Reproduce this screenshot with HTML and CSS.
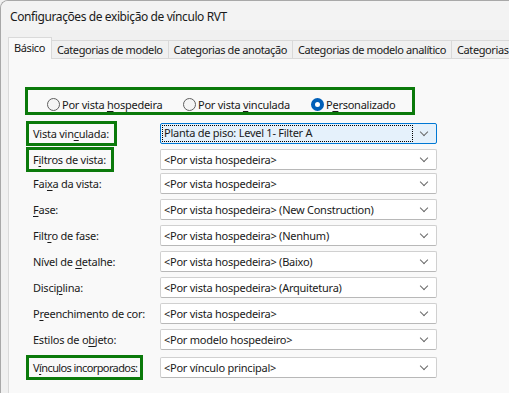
FILE: index.html
```html
<!DOCTYPE html>
<html lang="pt">
<head>
    <meta charset="UTF-8">
    <title>Configurações de exibição de vínculo RVT</title>
    <link rel="stylesheet" href="styles.css">
</head>
<body>
    <div class="window">
        <div class="titlebar">Configurações de exibição de vínculo RVT</div>

        <div class="tabs">
            <div class="tab active">Básico</div>
            <div class="tab">Categorias de modelo</div>
            <div class="tab">Categorias de anotação</div>
            <div class="tab">Categorias de modelo analítico</div>
            <div class="tab">Categorias</div>
        </div>

        <div class="panel">
            <div class="radio-group">
                <label class="radio r1"><span class="dot"></span><span>Por vista <u>h</u>ospedeira</span></label>
                <label class="radio r2"><span class="dot"></span><span>Por vista <u>v</u>inculada</span></label>
                <label class="radio"><span class="dot checked"></span><span>P<u>e</u>rsonalizado</span></label>
            </div>

            <div class="rows">
                <div class="row">
                    <span class="label hl">Vista vin<u>c</u>ulada:</span>
                    <div class="combo focus"><span class="value">Planta de piso: Level 1- Filter A</span><span class="chev"></span></div>
                </div>
                <div class="row">
                    <span class="label hl">F<u>i</u>ltros de vista:</span>
                    <div class="combo"><span class="value">&lt;Por vista hospedeira&gt;</span><span class="chev"></span></div>
                </div>
                <div class="row">
                    <span class="label">Fai<u>x</u>a da vista:</span>
                    <div class="combo"><span class="value">&lt;Por vista hospedeira&gt;</span><span class="chev"></span></div>
                </div>
                <div class="row">
                    <span class="label"><u>F</u>ase:</span>
                    <div class="combo"><span class="value">&lt;Por vista hospedeira&gt; (New Construction)</span><span class="chev"></span></div>
                </div>
                <div class="row">
                    <span class="label">Filt<u>r</u>o de fase:</span>
                    <div class="combo"><span class="value">&lt;Por vista hospedeira&gt; (Nenhum)</span><span class="chev"></span></div>
                </div>
                <div class="row">
                    <span class="label">Nível de <u>d</u>etalhe:</span>
                    <div class="combo"><span class="value">&lt;Por vista hospedeira&gt; (Baixo)</span><span class="chev"></span></div>
                </div>
                <div class="row">
                    <span class="label">Disci<u>p</u>lina:</span>
                    <div class="combo"><span class="value">&lt;Por vista hospedeira&gt; (Arquitetura)</span><span class="chev"></span></div>
                </div>
                <div class="row">
                    <span class="label">P<u>r</u>eenchimento de cor:</span>
                    <div class="combo"><span class="value">&lt;Por vista hospedeira&gt;</span><span class="chev"></span></div>
                </div>
                <div class="row">
                    <span class="label">Estilos de o<u>b</u>jeto:</span>
                    <div class="combo"><span class="value">&lt;Por modelo hospedeiro&gt;</span><span class="chev"></span></div>
                </div>
                <div class="row">
                    <span class="label hl tight">V<u>í</u>nculos incorporados:</span>
                    <div class="combo"><span class="value">&lt;Por vínculo principal&gt;</span><span class="chev"></span></div>
                </div>
            </div>
        </div>
    </div>
</body>
</html>
```

FILE: styles.css
```css
/* Dialog window */
body {
    margin: 0;
    font-family: "Noto Sans", "Open Sans", sans-serif;
    font-size: 11px;
    letter-spacing: -0.25px;
    color: #1a1a1a;
    background-color: #f0f0f0;
    overflow: hidden;
}
.window {
    width: 509px;
    height: 393px;
    background-color: #f0f0f0;
    border-top: 1px solid #a8a8a8;
    border-left: 1px solid #a8a8a8;
    border-top-left-radius: 8px;
    box-sizing: border-box;
    overflow: hidden;
}
.titlebar {
    height: 29px;
    line-height: 31px;
    padding-left: 9px;
    font-size: 12px;
    letter-spacing: -0.4px;
    background-color: #f3f3f3;
}
/* Tab strip */
.tabs {
    display: flex;
    align-items: flex-end;
    height: 28px;
    padding-left: 7px;
    white-space: nowrap;
    letter-spacing: -0.4px;
}
.tab {
    height: 17px;
    line-height: 17px;
    padding: 0 5px;
    border: 1px solid #d9d9d9;
    border-bottom: none;
    border-left: none;
    background-color: #f0f0f0;
}
.tab.active {
    height: 21px;
    line-height: 19px;
    padding: 0 6px 0 5px;
    border-left: 1px solid #d9d9d9;
    background-color: #f9f9f9;
    margin-bottom: -1px;
    position: relative;
}
.panel {
    margin-left: 7px;
    width: 560px;
    height: 340px;
    border: 1px solid #d9d9d9;
    background-color: #f9f9f9;
    padding: 28px 0 0 16px;
}
/* Radio buttons */
.radio-group {
    display: flex;
    width: 365px;
    height: 15px;
    padding: 7px 0 0 19px;
    border: 3px solid #0b7a0b;
}
.radio {
    display: flex;
    align-items: center;
    gap: 2px;
    height: 15px;
}
.r1 { width: 136px; }
.r2 { width: 128px; }
.dot {
    width: 11px;
    height: 11px;
    border: 1px solid #5f5f5f;
    border-radius: 50%;
    background-color: #f5f5f5;
}
.dot.checked {
    width: 5px;
    height: 5px;
    border: 4px solid #005fb8;
    background-color: #fff;
}
/* Rows of labels and combo boxes */
.rows {
    margin-top: 6px;
    padding-left: 1px;
}
.row {
    display: grid;
    grid-template-columns: 134px 277px;
    align-items: center;
    height: 21px;
    margin-bottom: 5px;
}
.label {
    padding-left: 7px;
    white-space: nowrap;
}
.label.hl {
    justify-self: start;
    height: 25px;
    line-height: 19px;
    padding: 0 5px 0 4px;
    border: 3px solid #0b7a0b;
    box-sizing: border-box;
}
.label.tight {
    letter-spacing: -0.6px;
    padding-right: 3px;
}
.combo {
    display: flex;
    align-items: center;
    height: 21px;
    box-sizing: border-box;
    border: 1px solid #d0d0d0;
    border-bottom-color: #b8b8b8;
    border-radius: 2px;
    background-color: #fff;
    padding-left: 3px;
}
.value {
    flex: 1;
    white-space: nowrap;
}
.combo.focus {
    background-color: #e5f1fb;
    border-color: #0078d4;
    padding-left: 1px;
}
.combo.focus .value {
    border: 1px dotted #000;
    height: 15px;
    line-height: 14px;
    padding-left: 1px;
    margin-right: 8px;
}
.chev {
    width: 5px;
    height: 5px;
    border-right: 1px solid #6a6a6a;
    border-bottom: 1px solid #6a6a6a;
    transform: rotate(45deg);
    margin: -4px 9px 0 0;
}
u {
    text-decoration-thickness: 1px;
    text-underline-offset: 2px;
}
```
